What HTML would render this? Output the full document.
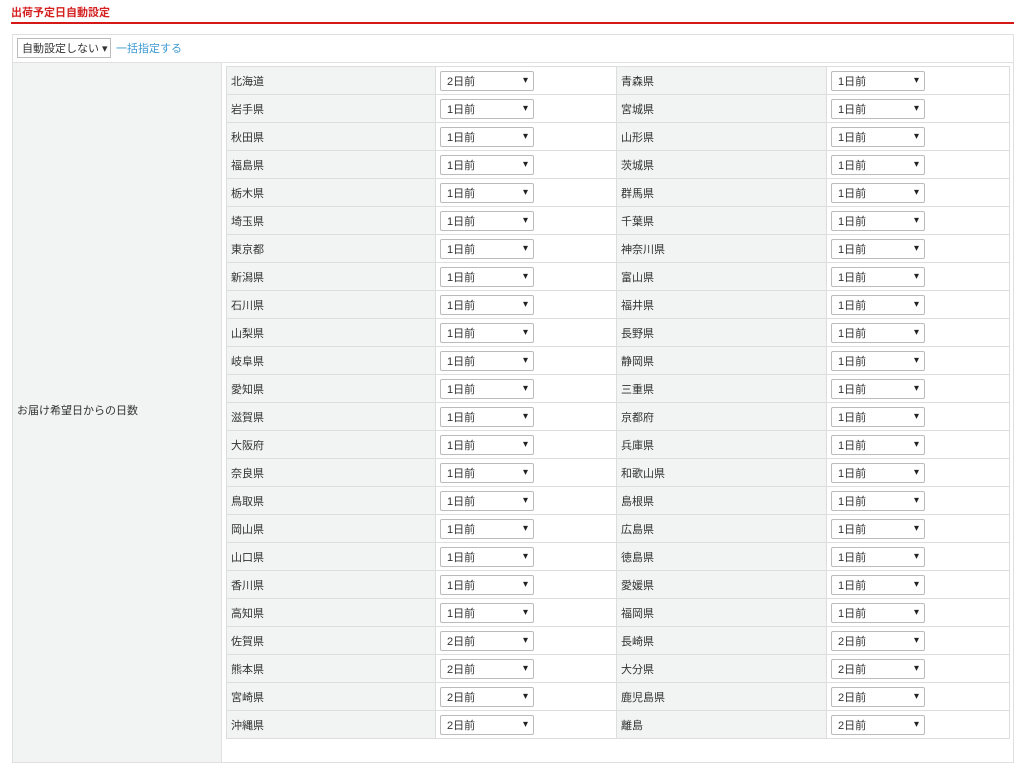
<!DOCTYPE html>
<html><head><meta charset="utf-8"><style>
*{box-sizing:border-box;margin:0;padding:0}
body{width:1024px;height:770px;background:#fff;font-family:"Liberation Sans","Noto Sans CJK JP",sans-serif;font-size:11px;color:#333;position:relative;overflow:hidden}
.title{position:absolute;left:11px;top:4px;color:#d42020;font-weight:bold;font-size:11px}
.rl{position:absolute;left:11px;top:22px;width:1003px;height:2px;background:#d41818}
.box{position:absolute;left:12px;top:34px;width:1002px;height:729px;border:1px solid #e0e0e0}
.top{position:absolute;left:0;top:0;width:1000px;height:28px;border-bottom:1px solid #e0e0e0}
.top .sel{position:absolute;left:4px;top:3px;width:94px;height:20px;border:1px solid #bbb;padding:0 0 0 4px;display:flex;align-items:center;font-size:11px;color:#333}
.top a{position:absolute;left:103px;top:5px;color:#3d9ad1;text-decoration:none}
.left{position:absolute;left:0;top:28px;width:209px;height:699px;background:#f2f3f3;border-right:1px solid #e0e0e0}
.left span{position:absolute;left:4px;top:339px}
table{position:absolute;left:226px;top:66px;border-collapse:collapse;table-layout:fixed}
td{border:1px solid #ddd;height:28px;padding:0 4px;vertical-align:middle}
td.l{background:#f2f3f3}
.s{width:94px;height:20px;border:1px solid #bbb;border-radius:2px;background:#fff;display:flex;align-items:center;justify-content:space-between;padding:0 5px 0 6px;font-size:11px}
.s i{font-style:normal;font-size:10px;color:#222}
</style></head><body>
<div class="title">出荷予定日自動設定</div>
<div class="rl"></div>
<div class="box">
<div class="top"><div class="sel">自動設定しない ▾</div><a>一括指定する</a></div>
<div class="left"><span>お届け希望日からの日数</span></div>
</div>
<table>
<colgroup><col style="width:209px"><col style="width:181px"><col style="width:210px"><col style="width:183px"></colgroup>
<tr><td class="l">北海道</td><td><div class="s">2日前<i>▾</i></div></td><td class="l">青森県</td><td><div class="s">1日前<i>▾</i></div></td></tr>
<tr><td class="l">岩手県</td><td><div class="s">1日前<i>▾</i></div></td><td class="l">宮城県</td><td><div class="s">1日前<i>▾</i></div></td></tr>
<tr><td class="l">秋田県</td><td><div class="s">1日前<i>▾</i></div></td><td class="l">山形県</td><td><div class="s">1日前<i>▾</i></div></td></tr>
<tr><td class="l">福島県</td><td><div class="s">1日前<i>▾</i></div></td><td class="l">茨城県</td><td><div class="s">1日前<i>▾</i></div></td></tr>
<tr><td class="l">栃木県</td><td><div class="s">1日前<i>▾</i></div></td><td class="l">群馬県</td><td><div class="s">1日前<i>▾</i></div></td></tr>
<tr><td class="l">埼玉県</td><td><div class="s">1日前<i>▾</i></div></td><td class="l">千葉県</td><td><div class="s">1日前<i>▾</i></div></td></tr>
<tr><td class="l">東京都</td><td><div class="s">1日前<i>▾</i></div></td><td class="l">神奈川県</td><td><div class="s">1日前<i>▾</i></div></td></tr>
<tr><td class="l">新潟県</td><td><div class="s">1日前<i>▾</i></div></td><td class="l">富山県</td><td><div class="s">1日前<i>▾</i></div></td></tr>
<tr><td class="l">石川県</td><td><div class="s">1日前<i>▾</i></div></td><td class="l">福井県</td><td><div class="s">1日前<i>▾</i></div></td></tr>
<tr><td class="l">山梨県</td><td><div class="s">1日前<i>▾</i></div></td><td class="l">長野県</td><td><div class="s">1日前<i>▾</i></div></td></tr>
<tr><td class="l">岐阜県</td><td><div class="s">1日前<i>▾</i></div></td><td class="l">静岡県</td><td><div class="s">1日前<i>▾</i></div></td></tr>
<tr><td class="l">愛知県</td><td><div class="s">1日前<i>▾</i></div></td><td class="l">三重県</td><td><div class="s">1日前<i>▾</i></div></td></tr>
<tr><td class="l">滋賀県</td><td><div class="s">1日前<i>▾</i></div></td><td class="l">京都府</td><td><div class="s">1日前<i>▾</i></div></td></tr>
<tr><td class="l">大阪府</td><td><div class="s">1日前<i>▾</i></div></td><td class="l">兵庫県</td><td><div class="s">1日前<i>▾</i></div></td></tr>
<tr><td class="l">奈良県</td><td><div class="s">1日前<i>▾</i></div></td><td class="l">和歌山県</td><td><div class="s">1日前<i>▾</i></div></td></tr>
<tr><td class="l">鳥取県</td><td><div class="s">1日前<i>▾</i></div></td><td class="l">島根県</td><td><div class="s">1日前<i>▾</i></div></td></tr>
<tr><td class="l">岡山県</td><td><div class="s">1日前<i>▾</i></div></td><td class="l">広島県</td><td><div class="s">1日前<i>▾</i></div></td></tr>
<tr><td class="l">山口県</td><td><div class="s">1日前<i>▾</i></div></td><td class="l">徳島県</td><td><div class="s">1日前<i>▾</i></div></td></tr>
<tr><td class="l">香川県</td><td><div class="s">1日前<i>▾</i></div></td><td class="l">愛媛県</td><td><div class="s">1日前<i>▾</i></div></td></tr>
<tr><td class="l">高知県</td><td><div class="s">1日前<i>▾</i></div></td><td class="l">福岡県</td><td><div class="s">1日前<i>▾</i></div></td></tr>
<tr><td class="l">佐賀県</td><td><div class="s">2日前<i>▾</i></div></td><td class="l">長崎県</td><td><div class="s">2日前<i>▾</i></div></td></tr>
<tr><td class="l">熊本県</td><td><div class="s">2日前<i>▾</i></div></td><td class="l">大分県</td><td><div class="s">2日前<i>▾</i></div></td></tr>
<tr><td class="l">宮崎県</td><td><div class="s">2日前<i>▾</i></div></td><td class="l">鹿児島県</td><td><div class="s">2日前<i>▾</i></div></td></tr>
<tr><td class="l">沖縄県</td><td><div class="s">2日前<i>▾</i></div></td><td class="l">離島</td><td><div class="s">2日前<i>▾</i></div></td></tr>
</table>
</body></html>
